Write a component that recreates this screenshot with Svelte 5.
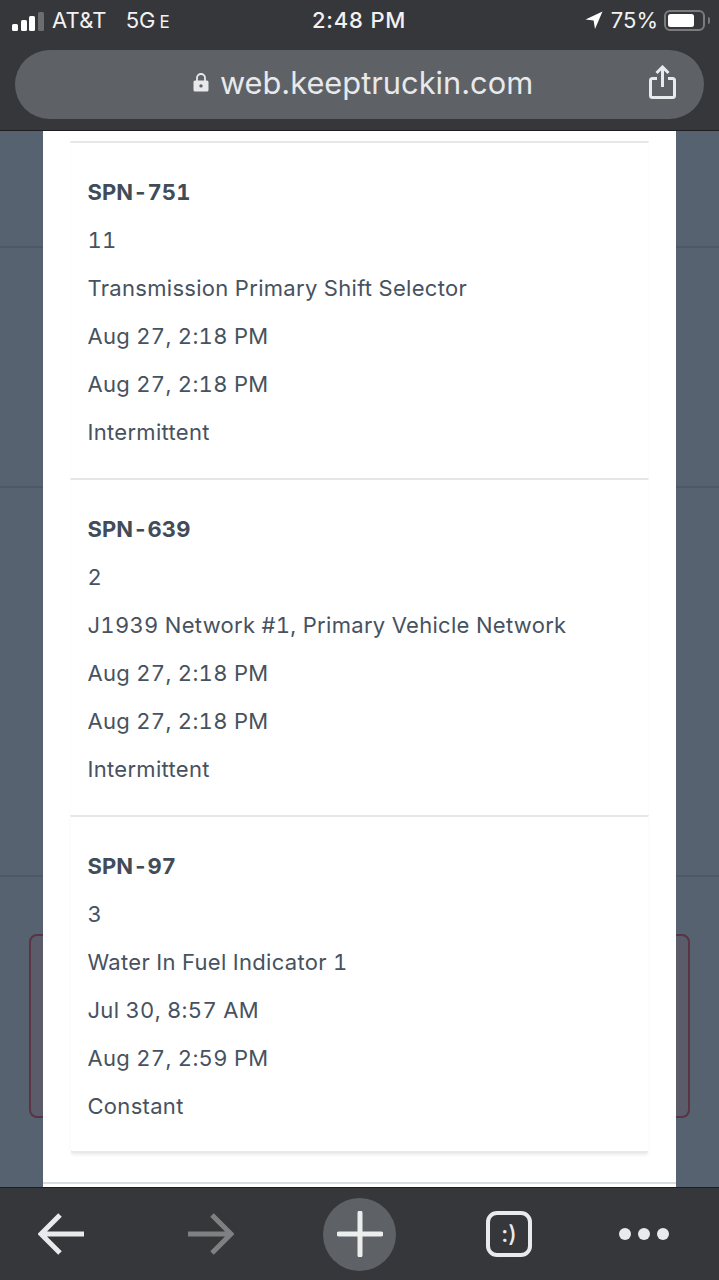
<script>
  const cards = [
    { code: 'SPN-751', rows: ['11', 'Transmission Primary Shift Selector', 'Aug 27, 2:18 PM', 'Aug 27, 2:18 PM', 'Intermittent'] },
    { code: 'SPN-639', rows: ['2', 'J1939 Network #1, Primary Vehicle Network', 'Aug 27, 2:18 PM', 'Aug 27, 2:18 PM', 'Intermittent'] },
    { code: 'SPN-97', rows: ['3', 'Water In Fuel Indicator 1', 'Jul 30, 8:57 AM', 'Aug 27, 2:59 PM', 'Constant'] }
  ];
</script>

<div class="phone">
  <header class="chrome-top">
    <div class="status">
      <div class="status-left">
        <span class="signal"><i class="b1"></i><i class="b2"></i><i class="b3"></i><i class="b4"></i></span>
        <span class="carrier">AT&amp;T</span>
        <span class="network">5G<small>E</small></span>
      </div>
      <div class="clock">2:48 PM</div>
      <div class="status-right">
        <svg class="loc" width="18" height="20" viewBox="0 0 18 20"><path d="M17.5 1.5 L10 19 L8.6 10.6 L0.5 9.6 Z" fill="#fff"/></svg>
        <span class="pct">75%</span>
        <span class="battery"><span class="fill"></span></span>
        <span class="nub"></span>
      </div>
    </div>
    <div class="urlbar">
      <div class="url">
        <svg width="16" height="21" viewBox="0 0 16 21"><path d="M4 9V6a4 4 0 0 1 8 0v3" fill="none" stroke="#e8e9eb" stroke-width="1.8"/><path fill-rule="evenodd" d="M2 8.5h12a1.5 1.5 0 0 1 1.5 1.5v8a1.5 1.5 0 0 1-1.5 1.5H2A1.5 1.5 0 0 1 .5 18v-8A1.5 1.5 0 0 1 2 8.5Zm6 3.7a1.7 1.7 0 1 0 0 3.4 1.7 1.7 0 0 0 0-3.4Z" fill="#e8e9eb"/></svg>
        <span>web.keeptruckin.com</span>
      </div>
      <svg class="share" width="27" height="34" viewBox="0 0 27 34"><path d="M8 13.500H3.500a2 2 0 0 0-2 2v15a2 2 0 0 0 2 2h20a2 2 0 0 0 2-2v-15a2 2 0 0 0-2-2H19M13.500 22V2.500M7.500 8l6-6 6 6" fill="none" stroke="#e9eaec" stroke-width="3"/></svg>
    </div>
  </header>

  <main class="viewport">
    <div class="backdrop">
      <div class="band b-a"></div>
      <div class="band b-b"></div>
      <div class="band b-c"></div>
      <div class="alert"></div>
    </div>
    <section class="modal">
      <div class="list">
        {#each cards as card}
          <article class="card">
            <div class="row code">{card.code}</div>
            {#each card.rows as row}
              <div class="row">{row}</div>
            {/each}
          </article>
        {/each}
      </div>
      <div class="next-rule"></div>
    </section>
  </main>

  <footer class="chrome-bottom">
    <svg width="48" height="44" viewBox="0 0 48 44"><path d="M46 22H3M22 3 3 22l19 19" fill="none" stroke="#e9eaec" stroke-width="5"/></svg>
    <svg width="48" height="44" viewBox="0 0 48 44"><path d="M2 22h43M26 3l19 19-19 19" fill="none" stroke="#7f8081" stroke-width="5"/></svg>
    <div class="plus">
      <svg width="46" height="46" viewBox="0 0 46 46"><path d="M23 2v42M2 23h42" fill="none" stroke="#eceded" stroke-width="5" stroke-linecap="round"/></svg>
    </div>
    <div class="tabs">:)</div>
    <div class="dots"><i></i><i></i><i></i></div>
  </footer>
</div>

<style>
  :global(body) {
    margin: 0;
    background: #36373a;
  }
  .phone {
    width: 719px;
    height: 1280px;
    display: flex;
    flex-direction: column;
    overflow: hidden;
    font-family: Inter, "Liberation Sans", sans-serif;
  }
  .chrome-top {
    height: 131px;
    box-sizing: border-box;
    background: #36373a;
    border-bottom: 1px solid #1d1e20;
    padding: 0 15px 0 12px;
    flex: none;
  }
  .status {
    height: 50px;
    position: relative;
    display: flex;
    align-items: center;
    justify-content: space-between;
    color: #f2f2f3;
    font-size: 22px;
    padding-bottom: 10px;
    box-sizing: border-box;
  }
  .status-left, .status-right {
    display: flex;
    align-items: center;
  }
  .signal {
    display: flex;
    align-items: flex-end;
    gap: 2.500px;
    width: 32px;
    height: 21px;
  }
  .signal i {
    width: 6px;
    border-radius: 1.500px;
    background: #fff;
    display: block;
  }
  .signal .b1 { height: 7px; }
  .signal .b2 { height: 11px; }
  .signal .b3 { height: 15px; }
  .signal .b4 { height: 19px; background: #6c6d6f; }
  .carrier { margin-left: 8px; letter-spacing: 0.2px; }
  .network { margin-left: 19px; }
  .network small { font-size: 17px; margin-left: 4px; }
  .clock {
    position: absolute;
    left: 300px;
    font-size: 22px;
    font-weight: 500;
    letter-spacing: 0.8px;
  }
  .status-right { margin-right: -6px; }
  .pct { margin-left: 8px; }
  .battery {
    display: block;
    width: 41px;
    height: 21px;
    box-sizing: border-box;
    border: 2px solid #7b7c7e;
    border-radius: 6px;
    padding: 2px;
    margin-left: 6px;
  }
  .fill {
    display: block;
    width: 26px;
    height: 13px;
    background: #fff;
    border-radius: 2.500px;
  }
  .nub {
    width: 2px;
    height: 7px;
    margin-left: 3px;
    background: #77787a;
    border-radius: 0 2px 2px 0;
  }
  .urlbar {
    margin-left: 3px;
    height: 69px;
    border-radius: 35px;
    background: #5e6166;
    position: relative;
    display: flex;
    align-items: center;
    justify-content: center;
  }
  .url {
    display: flex;
    align-items: center;
    gap: 11px;
    color: #e8e9eb;
    font-size: 30.800px;
    margin: 0 -7px 4px 0;
  }
  .share {
    position: absolute;
    right: 28px;
    top: 15px;
  }
  .viewport {
    flex: 1;
    min-height: 0;
    position: relative;
    background: #576270;
  }
  .backdrop {
    display: flex;
    flex-direction: column;
    height: 100%;
  }
  .band {
    flex: none;
    box-sizing: border-box;
    border-bottom: 2px solid #4e5968;
  }
  .b-a { height: 117px; }
  .b-b { height: 240px; }
  .b-c { height: 389px; }
  .alert {
    margin: 57px 29px 0;
    height: 184px;
    box-sizing: border-box;
    border: 2px solid #5a3345;
    border-radius: 8px;
    background: #5a5c69;
    flex: none;
  }
  .modal {
    position: absolute;
    left: 43px;
    top: 0;
    width: 633px;
    height: 100%;
    background: #fff;
    overflow: hidden;
  }
  .list {
    margin: 10px 27px 0;
    display: flex;
    flex-direction: column;
  }
  .card {
    height: 337px;
    box-sizing: border-box;
    padding-top: 25px;
    border-top: 2px solid #e6e6e7;
    border-left: 1px solid #fcfcfc;
    border-right: 1px solid #fcfcfc;
    color: #475260;
  }
  .card:last-child {
    box-shadow: 0 3px 3px -1px rgba(80, 80, 80, 0.1);
    border-bottom: 2px solid #e9e9ea;
    height: 338px;
    border-radius: 0 0 3px 3px;
  }
  .row {
    height: 48px;
    line-height: 48px;
    padding-left: 16.500px;
    font-size: 22px;
    letter-spacing: 0.3px;
    font-variant-numeric: tabular-nums;
    white-space: nowrap;
  }
  .code {
    font-weight: 700;
    color: #424c59;
    letter-spacing: 0.1px;
  }
  .next-rule {
    height: 2px;
    margin-top: 29px;
    background: #d8dde1;
  }
  .chrome-bottom {
    height: 93px;
    flex: none;
    box-sizing: border-box;
    background: #36373a;
    border-top: 1px solid #1d1e20;
    display: flex;
    align-items: center;
    position: relative;
    padding-left: 38px;
  }
  .chrome-bottom > svg:nth-child(2) { margin-left: 100px; }
  .plus {
    width: 73px;
    height: 73px;
    border-radius: 50%;
    background: #5e6166;
    display: flex;
    align-items: center;
    justify-content: center;
    margin-left: 89px;
  }
  .tabs {
    width: 46px;
    height: 46px;
    box-sizing: border-box;
    border: 4px solid #e9eaec;
    border-radius: 11px;
    margin-left: 90px;
    color: #e9eaec;
    font-size: 23px;
    font-weight: 500;
    display: flex;
    align-items: center;
    justify-content: center;
  }
  .dots {
    display: flex;
    gap: 7px;
    margin-left: 87px;
  }
  .dots i {
    width: 12px;
    height: 12px;
    border-radius: 50%;
    background: #e9eaec;
  }
</style>
